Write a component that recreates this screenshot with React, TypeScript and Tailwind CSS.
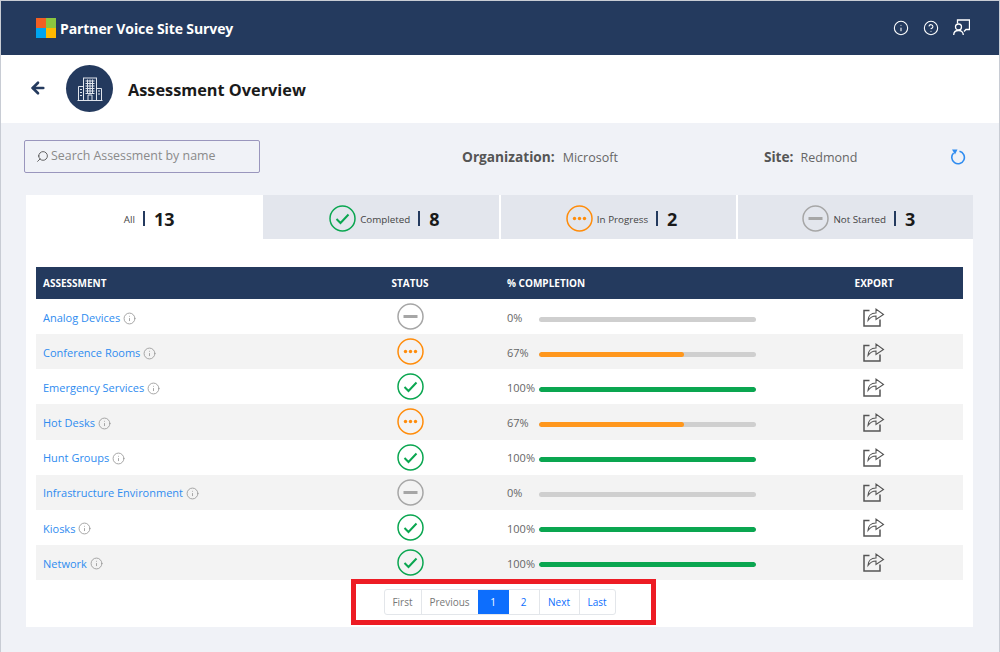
import React from 'react';
import { ArrowLeft, Info, CircleHelp, Search } from 'lucide-react';

type Status = 'done' | 'progress' | 'none';

const rows: { name: string; status: Status; pct: number }[] = [
  { name: 'Analog Devices', status: 'none', pct: 0 },
  { name: 'Conference Rooms', status: 'progress', pct: 67 },
  { name: 'Emergency Services', status: 'done', pct: 100 },
  { name: 'Hot Desks', status: 'progress', pct: 67 },
  { name: 'Hunt Groups', status: 'done', pct: 100 },
  { name: 'Infrastructure Environment', status: 'none', pct: 0 },
  { name: 'Kiosks', status: 'done', pct: 100 },
  { name: 'Network', status: 'done', pct: 100 },
];

const StatusIcon: React.FC<{ status: Status }> = ({ status }) => {
  const color = status === 'done' ? '#0aa650' : status === 'progress' ? '#ff8c0a' : '#a6a6a6';
  return (
    <svg width="27" height="27" viewBox="0 0 27 27" fill="none">
      <circle cx="13.5" cy="13.5" r="12.5" stroke={color} strokeWidth="1.5" />
      {status === 'done' && <path d="M7.5 14l4 4 8-8.5" stroke={color} strokeWidth="2" />}
      {status === 'progress' && (
        <g fill={color}>
          <circle cx="8.5" cy="13.5" r="1.7" />
          <circle cx="13.5" cy="13.5" r="1.7" />
          <circle cx="18.5" cy="13.5" r="1.7" />
        </g>
      )}
      {status === 'none' && <rect x="6.5" y="12" width="14" height="3" fill={color} />}
    </svg>
  );
};

const ExportIcon = () => (
  <svg width="22" height="20" viewBox="0 0 22 20" fill="none" stroke="#555" strokeWidth="1.1">
    <path d="M6.500 3.500H1v15.500h16v-6.500" strokeWidth="1.5" />
    <path d="M5 13.500c0-4.500 3-7.500 8-7.500V2l7.500 5.500-7.500 5V9c-3.500 0-6 1.500-8 4.500z" />
  </svg>
);

const MsLogo = () => (
  <div className="grid grid-cols-2 w-[20px] h-[20px]">
    <div className="bg-[#f25f22]" />
    <div className="bg-[#8cc63f]" />
    <div className="bg-[#00a4ef]" />
    <div className="bg-[#ffb900]" />
  </div>
);

const BuildingIcon = () => (
  <svg width="26" height="26" viewBox="0 0 26 26" fill="none" stroke="#dfe4ec" strokeWidth="1">
    <rect x="6.500" y="2" width="13" height="22.500" />
    <path d="M1.500 25V10.500h5M19.500 12.500h5V25M0.500 24.500h25M11 24.500v-5.500h4v5.500" />
    <path d="M8.500 5h9M8.500 7.500h9M8.500 10h9M8.500 12.500h9M8.500 15h9M8.500 17.500h9M10.500 3.500v14M13 3.500v14M15.500 3.500v14M3 13.500h2M3 16.500h2M3 19.500h2M21 15h2M21 18h2" strokeWidth="1" />
  </svg>
);

const Tab: React.FC<{ status?: Status; label: string; count: number; active?: boolean }> = ({ status, label, count, active }) => (
  <div className={`flex-1 h-[44px] flex items-center justify-center pl-[7px] pt-[3px] ${active ? 'bg-white' : 'bg-[#e3e6ed]'}`}>
    {status && <StatusIcon status={status} />}
    <span className="ml-[4px] pt-[3px] text-[9.800px] text-[#444]">{label}</span>
    <span className="ml-[8px] h-[15px] w-[2px] bg-[#243a5e]" />
    <span className="ml-[9px] pt-[2px] text-[18px] font-bold text-[#1a1a1a]">{count}</span>
  </div>
);

export default function App() {
  return (
    <div className="w-[1000px] h-[652px] overflow-hidden bg-[#f0f2f7] border border-[#c8ccd4] border-b-0 relative font-['Open_Sans',sans-serif]">
      <header className="h-[54px] bg-[#243a5e] flex items-center pl-[35px] pr-[29px] text-white">
        <MsLogo />
        <span className="ml-[4px] text-[14px] font-bold tracking-[-0.1px]">Partner Voice Site Survey</span>
        <div className="ml-auto flex items-center gap-[14px]">
          <Info size={16} strokeWidth={1.6} />
          <CircleHelp size={16} strokeWidth={1.6} />
          <svg width="17" height="17" viewBox="0 0 17 17" fill="none" stroke="white" strokeWidth="1.3" className="-mt-[2px]">
            <path d="M4.500 4.500V1h12v9.500h-3.500l-2 2" />
            <circle cx="5.500" cy="8" r="3" />
            <path d="M0.700 16c0-3 2-4.500 4.800-4.500s4.800 1.500 4.800 4.500" />
          </svg>
        </div>
      </header>

      <div className="h-[68px] bg-white flex items-center pl-[28px]">
        <ArrowLeft size={18} strokeWidth={3.5} className="text-[#243a5e] -mt-[2px]" />
        <div className="ml-[19px] w-[47px] h-[47px] rounded-full bg-[#243a5e] flex items-center justify-center -mt-[1px]">
          <BuildingIcon />
        </div>
        <h1 className="ml-[15px] pt-[2px] text-[16.300px] font-bold text-[#1a1a1a]">Assessment Overview</h1>
      </div>

      <div className="h-[72px] flex items-center pl-[23px] pr-[33px] pb-[6px]">
        <div className="w-[236px] h-[33px] border border-[#9a96bd] rounded-[2px] flex items-center pl-[11px] text-[12.400px] text-[#8a8a8a]">
          <Search size={13} strokeWidth={1.5} className="text-[#444] -scale-x-100" />
          <span className="ml-[2px]">Search Assessment by name</span>
        </div>
        <div className="ml-[202px] pt-[2px] text-[13.700px] text-[#666]">
          <span className="font-bold text-[#555]">Organization:</span>
          <span className="ml-[8px] text-[12.500px]">Microsoft</span>
        </div>
        <div className="ml-[146px] pt-[2px] text-[13.700px] text-[#666]">
          <span className="font-bold text-[#555]">Site:</span>
          <span className="ml-[7px] text-[12.500px]">Redmond</span>
        </div>
        <svg width="16" height="17" viewBox="0 0 16 17" fill="none" className="ml-auto">
          <path d="M9.500 3.300A6.300 6.300 0 1 1 3.600 5" stroke="#2f8cf0" strokeWidth="1.6" />
          <path d="M2 1.500h5.500L5 6.500z" fill="#2f8cf0" />
        </svg>
      </div>

      <div className="ml-[25px] w-[947px] h-[432px] bg-white">
        <div className="flex gap-[2px]">
          <Tab label="All" count={13} active />
          <Tab status="done" label="Completed" count={8} />
          <Tab status="progress" label="In Progress" count={2} />
          <Tab status="none" label="Not Started" count={3} />
        </div>

        <div className="mx-[10px] mt-[28px]">
          <div className="h-[32px] bg-[#243a5e] flex items-center text-[10px] font-bold text-white">
            <div className="w-[336px] pl-[7px]">ASSESSMENT</div>
            <div className="w-[76px] text-center">STATUS</div>
            <div className="w-[389px] pl-[59px]">% COMPLETION</div>
            <div className="w-[74px] text-center">EXPORT</div>
          </div>
          {rows.map((row, i) => (
            <div key={row.name} className={`h-[35.125px] flex items-center ${i % 2 === 1 ? 'bg-[#f3f3f3]' : 'bg-white'}`}>
              <div className="w-[336px] pl-[7px] pt-[3px] flex items-center text-[11px] text-[#2f8cf0]">
                {row.name}
                <Info size={13} strokeWidth={1.6} className="ml-[3px] text-[#999]" />
              </div>
              <div className="w-[76px] flex justify-center">
                <StatusIcon status={row.status} />
              </div>
              <div className="w-[389px] pl-[59px] pt-[3px] flex items-center">
                <span className="w-[32px] text-[11px] text-[#666]">{row.pct}%</span>
                <div className="w-[217px] h-[5px] mt-[2px] rounded-full bg-[#cfcfcf] overflow-hidden">
                  <div
                    className={`h-full rounded-full ${row.pct === 100 ? 'bg-[#0aa650]' : 'bg-[#ff971d]'}`}
                    style={{ width: `${row.pct}%` }}
                  />
                </div>
              </div>
              <div className="w-[74px] flex justify-center">
                <ExportIcon />
              </div>
            </div>
          ))}
          <div className="flex justify-center mt-[9px] text-[10px]">
            <div className="flex h-[26px] border border-[#e3e6ea] rounded-[3px]">
              <div className="w-[37px] flex items-center justify-center text-[#777] border-r border-[#e3e6ea]">First</div>
              <div className="w-[56px] flex items-center justify-center text-[#777]">Previous</div>
              <div className="w-[31px] flex items-center justify-center bg-[#0d6efd] text-white">1</div>
              <div className="w-[31px] flex items-center justify-center text-[#0d6efd] border-r border-[#e3e6ea]">2</div>
              <div className="w-[40px] flex items-center justify-center text-[#0d6efd] border-r border-[#e3e6ea]">Next</div>
              <div className="w-[35px] flex items-center justify-center text-[#0d6efd]">Last</div>
            </div>
          </div>
        </div>
      </div>

      {/* red annotation around the pager */}
      <div className="absolute left-[350px] top-[578px] w-[305px] h-[46px] border-[5px] border-[#ed1c24]" />
    </div>
  );
}
